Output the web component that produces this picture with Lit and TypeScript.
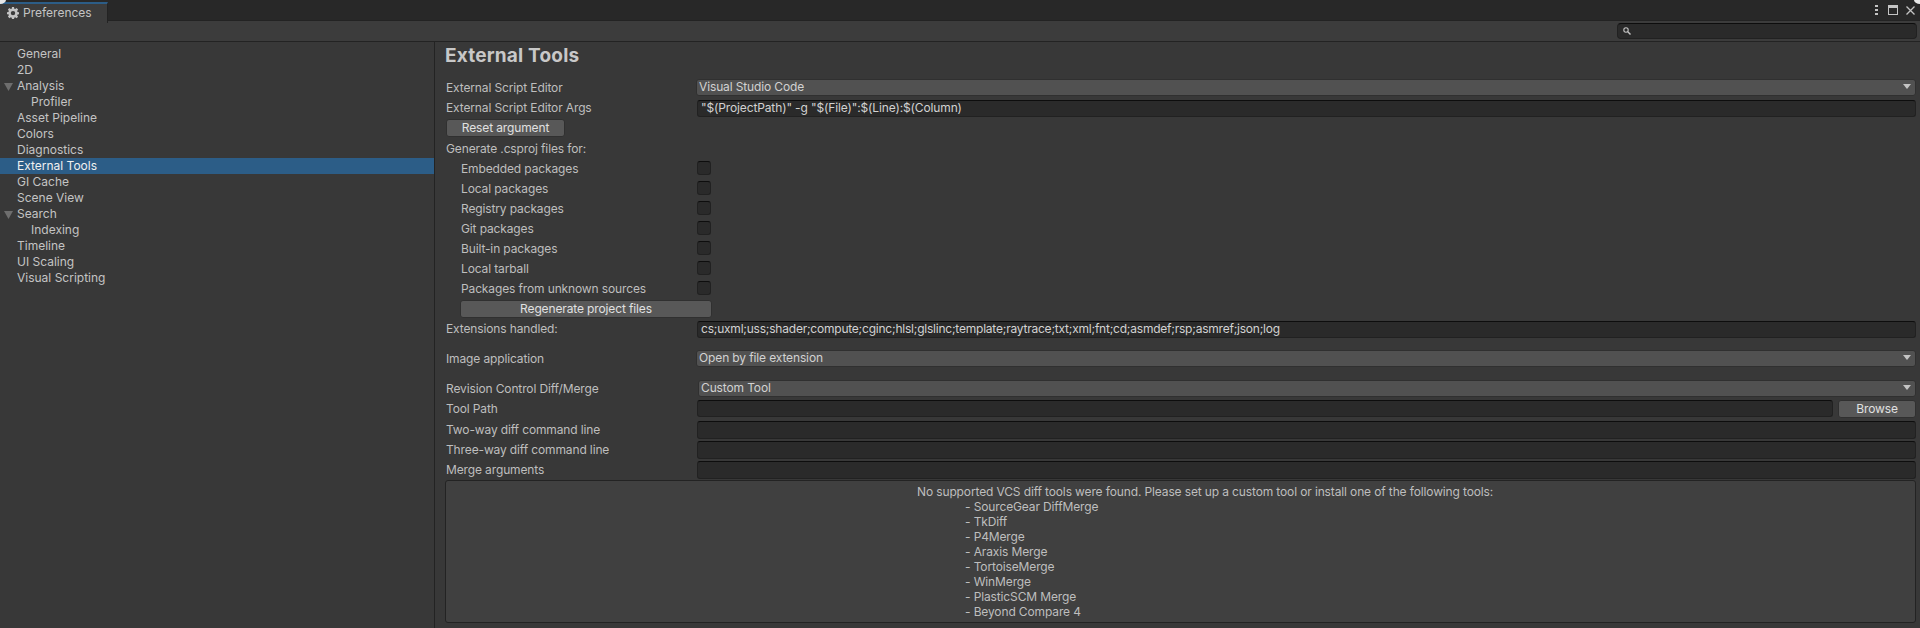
import { LitElement, html, css } from 'lit'
import { customElement } from 'lit/decorators.js'
import { classMap } from 'lit/directives/class-map.js'

const tree = [
  { name: 'General' },
  { name: '2D' },
  { name: 'Analysis', open: true },
  { name: 'Profiler', child: true },
  { name: 'Asset Pipeline' },
  { name: 'Colors' },
  { name: 'Diagnostics' },
  { name: 'External Tools', selected: true },
  { name: 'GI Cache' },
  { name: 'Scene View' },
  { name: 'Search', open: true },
  { name: 'Indexing', child: true },
  { name: 'Timeline' },
  { name: 'UI Scaling' },
  { name: 'Visual Scripting' }
]

const packages = [
  'Embedded packages',
  'Local packages',
  'Registry packages',
  'Git packages',
  'Built-in packages',
  'Local tarball',
  'Packages from unknown sources'
]

const diffTools = [
  'SourceGear DiffMerge',
  'TkDiff',
  'P4Merge',
  'Araxis Merge',
  'TortoiseMerge',
  'WinMerge',
  'PlasticSCM Merge',
  'Beyond Compare 4'
]

const caret = html`<svg class="caret" width="8" height="5" viewBox="0 0 8 5"><path d="M0 0h8L4 5z" fill="#c4c4c4" /></svg>`

@customElement('app-root')
export class AppRoot extends LitElement {
  static styles = css`
    :host {
      display: block;
      position: relative;
      width: 1920px;
      height: 628px;
      overflow: hidden;
      background: #383838;
      color: #c4c4c4;
      font: 12px/16px Inter, 'Noto Sans', sans-serif;
    }
    .tabbar {
      display: flex;
      align-items: flex-start;
      height: 21px;
      background: #282828;
      border-bottom: 1px solid #232323;
      box-sizing: border-box;
    }
    .tab {
      display: flex;
      align-items: center;
      gap: 4px;
      box-sizing: border-box;
      width: 108px;
      height: 21px;
      margin-top: 2px;
      padding: 0 0 2px 7px;
      background: #3c3c3c;
      border-top: 2px solid #2c5d87;
      border-right: 1px solid #232323;
    }
    .window-icons {
      display: flex;
      align-items: center;
      margin-left: auto;
      height: 20px;
      padding-right: 5px;
      gap: 6px;
    }
    .toolbar {
      display: flex;
      justify-content: flex-end;
      align-items: center;
      box-sizing: border-box;
      height: 21px;
      padding-right: 3px;
      background: #3c3c3c;
      border-bottom: 1px solid #232323;
    }
    .search {
      display: flex;
      align-items: center;
      box-sizing: border-box;
      width: 300px;
      height: 16px;
      padding-left: 5px;
      background: #2a2a2a;
      border: 1px solid #212121;
      border-top-color: #0d0d0d;
      border-radius: 4px;
    }
    .body {
      display: flex;
      height: 586px;
    }
    .sidebar {
      box-sizing: border-box;
      width: 435px;
      padding-top: 4px;
      border-right: 1px solid #232323;
    }
    .node {
      position: relative;
      height: 16px;
      padding-left: 17px;
      white-space: nowrap;
    }
    .node.child {
      padding-left: 31px;
    }
    .node.selected {
      background: #2c5d87;
      color: #f0f0f0;
    }
    .arrow {
      position: absolute;
      left: 4px;
      top: 5px;
    }
    .content {
      flex: 1;
      min-width: 0;
      padding: 1px 4px 0 11px;
      letter-spacing: -0.13px;
      color: #bebebe;
    }
    h1 {
      margin: 0 0 9px -1px;
      height: 26px;
      font-size: 19px;
      line-height: 26px;
      font-weight: 700;
      letter-spacing: 0.2px;
      color: #c8c8c8;
    }
    .row {
      display: grid;
      grid-template-columns: 251px 1fr;
      align-items: center;
      height: 20px;
      white-space: nowrap;
    }
    .row.indent {
      padding-left: 15px;
      grid-template-columns: 236px 1fr;
    }
    .gap-top {
      margin-top: 10px;
    }
    .dropdown {
      display: flex;
      align-items: center;
      justify-content: space-between;
      box-sizing: border-box;
      height: 17px;
      margin-bottom: 2px;
      padding: 0 4px 1px 2px;
      background: #515151;
      border: 1px solid #303030;
      border-radius: 3px;
      color: #d2d2d2;
    }
    .dropdown.first {
      margin-left: -1px;
    }
    .dropdown.shift {
      margin-left: 1px;
    }
    .field {
      box-sizing: border-box;
      height: 17px;
      padding: 0 3px;
      line-height: 13px;
      background: #2a2a2a;
      border: 1px solid #212121;
      border-top-color: #0d0d0d;
      border-radius: 3px;
      color: #d2d2d2;
    }
    .field.tall {
      height: 18px;
    }
    .field.extensions {
      letter-spacing: -0.22px;
    }
    .path {
      display: flex;
      gap: 5px;
    }
    .path .field {
      flex: 1;
    }
    .btn {
      box-sizing: border-box;
      height: 18px;
      line-height: 16px;
      text-align: center;
      background: #585858;
      border: 1px solid #303030;
      border-radius: 3px;
      color: #e0e0e0;
    }
    .reset {
      width: 119px;
      margin: 1px 0 2px;
    }
    .spaced {
      margin-top: 1px;
    }
    .regen {
      width: 252px;
      margin: 1px 0 0 14px;
    }
    .browse {
      flex: none;
      width: 78px;
    }
    .check {
      box-sizing: border-box;
      width: 14px;
      height: 14px;
      margin-bottom: 2px;
      background: #2a2a2a;
      border: 1px solid #212121;
      border-top-color: #0d0d0d;
      border-radius: 3px;
    }
    .help {
      box-sizing: border-box;
      height: 143px;
      margin-left: -1px;
      padding: 3px 0 0 471px;
      line-height: 15px;
      background: #404040;
      border: 1px solid #232323;
      border-radius: 3px;
      white-space: nowrap;
    }
    .help ul {
      margin: 0;
      padding: 0 0 0 48px;
      list-style: none;
    }
    .kebab {
      margin-right: -1px;
      margin-left: 1px;
    }
    .corner {
      position: absolute;
      top: 0;
      width: 6px;
      height: 4px;
      background: #e8e8e8;
    }
    .corner.left {
      left: 0;
      border-bottom-right-radius: 6px 4px;
    }
    .corner.right {
      right: 0;
      border-bottom-left-radius: 6px 4px;
    }
  `

  render() {
    return html`
      <div class="tabbar">
        <div class="tab">
          <svg width="12" height="12" viewBox="0 0 13 13">
            <path fill="#c4c4c4" fill-rule="evenodd" d="M5.400 0h2.200l.3 1.800 1 .4L10.400 1.200 12 2.800 11 4.300l.4 1 1.600.3v2.200l-1.600.3-.4 1 1 1.500-1.600 1.600-1.500-1-1 .4-.3 1.500H5.400l-.3-1.500-1-.4-1.500 1L1 10.400l1-1.500-.4-1L0 7.800V5.600l1.600-.3.4-1-1-1.500L2.600 1.200l1.500 1 1-.4zM6.500 4.200a2.400 2.400 0 1 0 0 4.800 2.400 2.400 0 0 0 0-4.800z" />
          </svg>
          <span>Preferences</span>
        </div>
        <div class="window-icons">
          <svg class="kebab" width="3" height="10" viewBox="0 0 3 10"><path fill="#c4c4c4" d="M0 0h3v2H0zM0 4h3v2H0zM0 8h3v2H0z" /></svg>
          <svg style="margin-left:5px" width="10" height="10" viewBox="0 0 10 10"><path fill="#c4c4c4" fill-rule="evenodd" d="M0 0h10v10H0zM1 3v6h8V3z" /></svg>
          <svg style="margin-left:2px" width="9" height="9" viewBox="0 0 9 9"><path stroke="#c4c4c4" stroke-width="1.300" d="M.5.500l8 8M8.500.500l-8 8" /></svg>
        </div>
      </div>
      <div class="toolbar">
        <div class="search">
          <svg width="8" height="8" viewBox="0 0 8 8"><circle cx="3" cy="3" r="2.200" fill="none" stroke="#c4c4c4" stroke-width="1.100" /><path d="M4.800 4.800L7.500 7.500" stroke="#c4c4c4" stroke-width="1.400" /></svg>
        </div>
      </div>
      <div class="body">
        <nav class="sidebar">
          ${tree.map(
            (n) => html`<div class=${classMap({ node: true, child: !!n.child, selected: !!n.selected })}>
              ${n.open
                ? html`<svg class="arrow" width="9" height="8" viewBox="0 0 9 8"><path d="M0 0h9L4.500 8z" fill="#6e6e6e" /></svg>`
                : ''}
              ${n.name}
            </div>`
          )}
        </nav>
        <main class="content">
          <h1>External Tools</h1>
          <div class="row">
            <span>External Script Editor</span>
            <div class="dropdown first"><span>Visual Studio Code</span>${caret}</div>
          </div>
          <div class="row">
            <span>External Script Editor Args</span>
            <div class="field">"$(ProjectPath)" -g "$(File)":$(Line):$(Column)</div>
          </div>
          <div class="btn reset">Reset argument</div>
          <div class="row spaced"><span>Generate .csproj files for:</span></div>
          ${packages.map(
            (p) => html`<div class="row indent"><span>${p}</span><div class="check"></div></div>`
          )}
          <div class="btn regen">Regenerate project files</div>
          <div class="row spaced">
            <span>Extensions handled:</span>
            <div class="field extensions">cs;uxml;uss;shader;compute;cginc;hlsl;glslinc;template;raytrace;txt;xml;fnt;cd;asmdef;rsp;asmref;json;log</div>
          </div>
          <div class="row gap-top">
            <span>Image application</span>
            <div class="dropdown first"><span>Open by file extension</span>${caret}</div>
          </div>
          <div class="row gap-top">
            <span>Revision Control Diff/Merge</span>
            <div class="dropdown shift"><span>Custom Tool</span>${caret}</div>
          </div>
          <div class="row">
            <span>Tool Path</span>
            <div class="path"><div class="field"></div><div class="btn browse">Browse</div></div>
          </div>
          <div class="row spaced"><span>Two-way diff command line</span><div class="field tall"></div></div>
          <div class="row"><span>Three-way diff command line</span><div class="field tall"></div></div>
          <div class="row"><span>Merge arguments</span><div class="field tall"></div></div>
          <div class="help">
            No supported VCS diff tools were found. Please set up a custom tool or install one of the following tools:
            <ul>
              ${diffTools.map((t) => html`<li>- ${t}</li>`)}
            </ul>
          </div>
        </main>
      </div>
      <div class="corner left"></div>
      <div class="corner right"></div>
    `
  }
}
